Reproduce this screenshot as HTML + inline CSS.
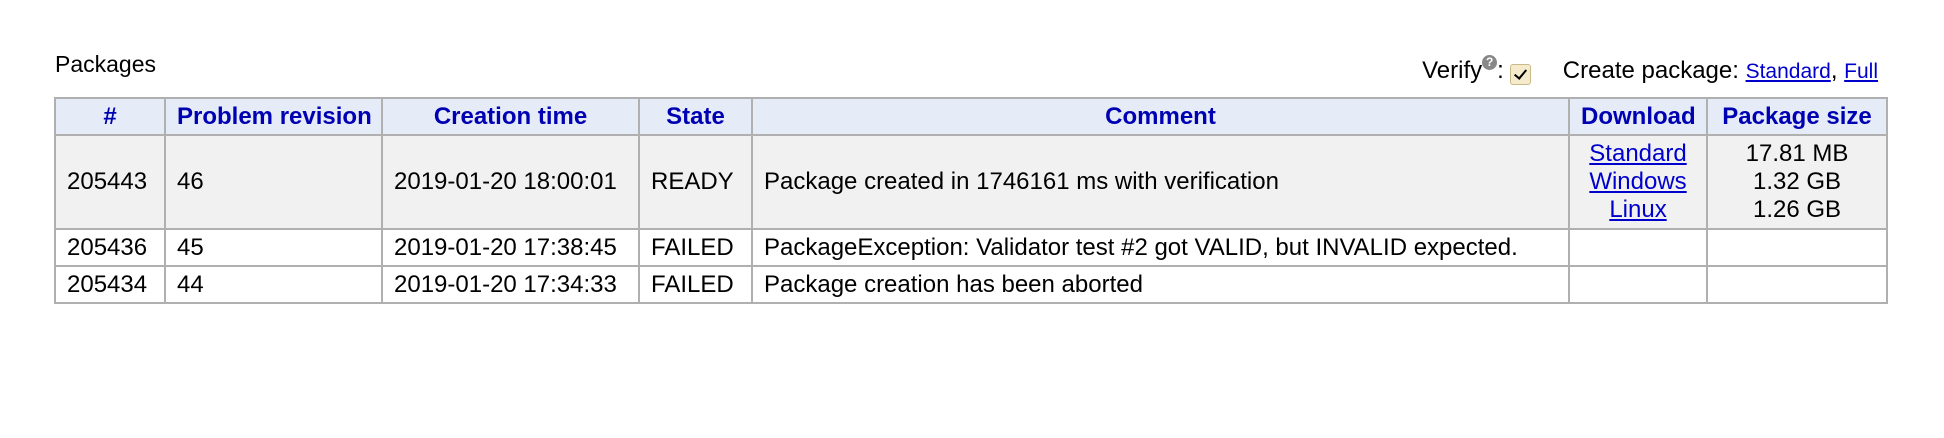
<!DOCTYPE html>
<html><head><meta charset="utf-8"><style>
body{margin:0;width:1944px;height:438px;background:#fff;font-family:"Liberation Sans",Arial,sans-serif;font-size:24px;color:#000;position:relative;overflow:hidden}
.title{position:absolute;left:55px;top:51px;font-size:23px}
.top{position:absolute;right:66px;top:55px;white-space:nowrap}
a{color:#0000cc;text-decoration:underline}
.cb{display:inline-block;width:19px;height:19px;border:1.5px solid #c8b98a;background:#f5ebcc;border-radius:3px;vertical-align:-7px;position:relative;margin-left:6px;margin-right:32px}
.cb:after{content:"";position:absolute;left:6px;top:2px;width:5px;height:10px;border:solid #000;border-width:0 2px 2px 0;transform:rotate(40deg)}
.q{display:inline-block;width:15px;height:15px;border-radius:50%;background:#888;color:#fff;font-size:12px;font-weight:bold;text-align:center;line-height:15px;vertical-align:12px}
table{position:absolute;left:54px;top:97px;border-collapse:collapse;table-layout:fixed;width:1832px}
td,th{border:2px solid #b0b0b0;padding:0 11px;white-space:nowrap}
th{background:#e5ebf7;color:#0000b3;font-weight:bold;height:35px;text-align:center}
tr.r1 td{background:#f1f1f1;height:92px;line-height:28px}
tr.r td{height:35px}
.c{text-align:center}
</style></head><body>
<div class="title">Packages</div>
<div class="top">Verify<span class="q">?</span>:<span class="cb"></span>Create package: <a style="font-size:21px">Standard</a>, <a style="font-size:21px">Full</a></div>
<table>
<colgroup><col style="width:110px"><col style="width:217px"><col style="width:257px"><col style="width:113px"><col style="width:817px"><col style="width:138px"><col style="width:180px"></colgroup>
<tr><th>#</th><th>Problem revision</th><th>Creation time</th><th>State</th><th>Comment</th><th>Download</th><th>Package size</th></tr>
<tr class="r1"><td>205443</td><td>46</td><td>2019-01-20 18:00:01</td><td>READY</td><td>Package created in 1746161 ms with verification</td><td class="c"><a>Standard</a><br><a>Windows</a><br><a>Linux</a></td><td class="c">17.81 MB<br>1.32 GB<br>1.26 GB</td></tr>
<tr class="r"><td>205436</td><td>45</td><td>2019-01-20 17:38:45</td><td>FAILED</td><td>PackageException: Validator test #2 got VALID, but INVALID expected.</td><td></td><td></td></tr>
<tr class="r"><td>205434</td><td>44</td><td>2019-01-20 17:34:33</td><td>FAILED</td><td>Package creation has been aborted</td><td></td><td></td></tr>
</table>
</body></html>
